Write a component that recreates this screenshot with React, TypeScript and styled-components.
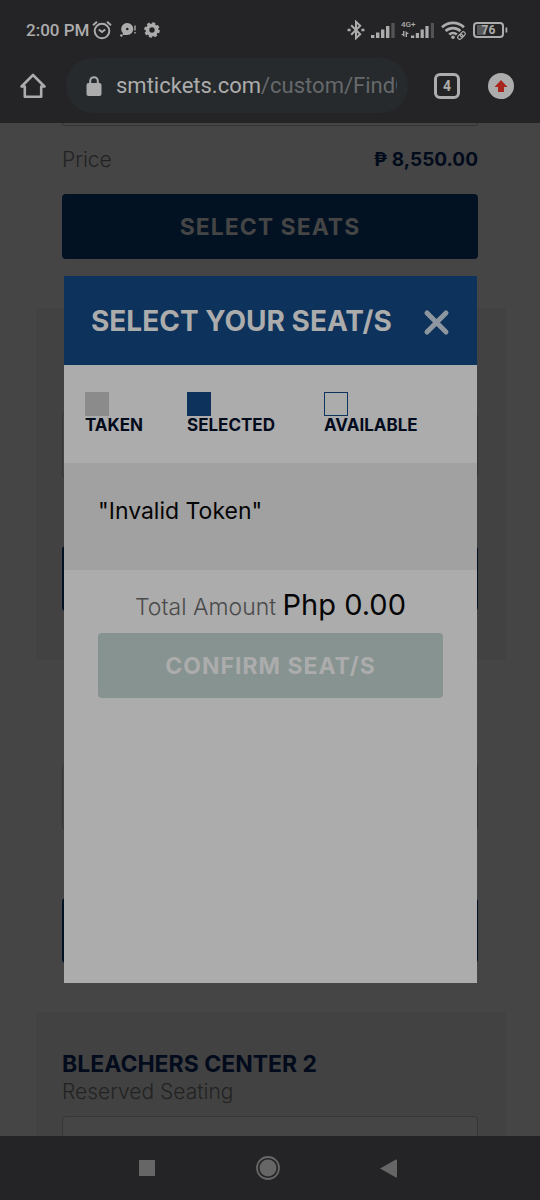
import React from "react";
import styled, { createGlobalStyle } from "styled-components";

const INK = "#020b1c";
const ICON = "#acacac";

const GlobalStyle = createGlobalStyle`
  *, *::before, *::after { box-sizing: border-box; }
  body { margin: 0; background: #454545; }
  button { font: inherit; color: inherit; border: 0; padding: 0; background: none; cursor: pointer; }
  svg { display: block; flex: none; }
`;

const Screen = styled.div`
  display: flex;
  flex-direction: column;
  height: 100vh;
  overflow: hidden;
  font-family: Inter, "Liberation Sans", sans-serif;
`;

const StatusBar = styled.header`
  display: flex;
  align-items: center;
  justify-content: space-between;
  height: 60px;
  padding: 0 32px 0 26px;
  flex: none;
  background: #242426;
  color: ${ICON};
  font: 500 17px/24px Roboto, sans-serif;
`;

const StatusGroup = styled.div<{ $gap: number }>`
  display: flex;
  align-items: center;
  gap: ${(p) => p.$gap}px;
`;

const BrowserBar = styled.nav`
  display: flex;
  align-items: center;
  height: 63px;
  padding: 0 26px 12px 19px;
  flex: none;
  background: #242426;
  color: ${ICON};
`;

const AddressPill = styled.button`
  display: flex;
  align-items: center;
  gap: 14px;
  flex: 1;
  min-width: 0;
  height: 55px;
  margin: 0 26px 0 19px;
  padding: 0 11px 0 20px;
  border-radius: 28px;
  background: #262a2d;
  text-align: left;
`;

const Url = styled.span`
  flex: 1;
  min-width: 0;
  overflow: hidden;
  white-space: nowrap;
  font: 400 22px/32px Roboto, sans-serif;
`;

const UrlPath = styled.span`
  color: #66696b;
`;

const BarButton = styled.button`
  display: flex;
  align-items: center;
  justify-content: center;
  width: 28px;
  height: 28px;
  flex: none;
`;

const TabCount = styled(BarButton)`
  width: 26px;
  height: 26px;
  margin-right: 28px;
  border: 3px solid ${ICON};
  border-radius: 6px;
  font: 700 14px/18px Roboto, sans-serif;
`;

const UpdateButton = styled(BarButton)`
  width: 26px;
  height: 26px;
  border-radius: 50%;
  background: ${ICON};
`;

const Page = styled.main`
  position: relative;
  flex: 1;
  min-height: 0;
  overflow: hidden;
  background: #454545;
`;

const TicketCard = styled.section<{ $tinted?: boolean }>`
  margin: 0 34px 0 36px;
  padding: 0 28px 49px 26px;
  background: ${(p) => (p.$tinted ? "#424242" : "transparent")};
`;

const CardHeading = styled.div`
  height: 104px;
  padding-top: 38px;
`;

const CardTitle = styled.h2`
  margin: 0;
  font-size: 23px;
  line-height: 28px;
  font-weight: 700;
  color: ${INK};
`;

const CardNote = styled.p`
  margin: 0;
  font-size: 21px;
  line-height: 28px;
  font-weight: 300;
  color: #222222;
`;

const TicketField = styled.div<{ $tail?: boolean }>`
  height: ${(p) => (p.$tail ? 3 : 66)}px;
  border: 1px solid #363636;
  border-top-width: ${(p) => (p.$tail ? 0 : 1)}px;
  border-radius: ${(p) => (p.$tail ? "0 0 4px 4px" : "4px")};
  background: #454545;
`;

const PriceRow = styled.div`
  display: flex;
  align-items: center;
  justify-content: space-between;
  height: 68px;
  font-size: 21px;
  line-height: 28px;
  color: #222222;
  font-weight: 300;
`;

const PriceValue = styled.strong`
  font-size: 19px;
  font-weight: 700;
  color: ${INK};
`;

const WideButton = styled.button<{ $pale?: boolean }>`
  display: block;
  width: 100%;
  height: 65px;
  border-radius: 4px;
  font-size: 23px;
  line-height: 28px;
  font-weight: 700;
  letter-spacing: 1px;
  background: ${(p) => (p.$pale ? "#869390" : "#021222")};
  color: ${(p) => (p.$pale ? "#acacac" : "#454545")};
`;

const Overlay = styled.div`
  position: absolute;
  inset: 0;
  display: flex;
  padding: 153px 63px 153px 64px;
`;

const Dialog = styled.section`
  flex: 1;
  min-width: 0;
  background: #acacac;
`;

const DialogHeader = styled.header`
  display: flex;
  align-items: center;
  justify-content: space-between;
  height: 89px;
  padding: 0 27px;
  background: #0d325b;
  color: #acacac;
`;

const DialogTitle = styled.h1`
  margin: 0;
  font-size: 28px;
  line-height: 36px;
  font-weight: 700;
  white-space: nowrap;
`;

const CloseButton = styled.button`
  padding-top: 4px;
`;

const Legend = styled.ul`
  display: flex;
  margin: 0;
  height: 98px;
  padding: 27px 21px 0;
  list-style: none;
`;

const LegendItem = styled.li<{ $width: number }>`
  width: ${(p) => p.$width}px;
  font-size: 17px;
  line-height: 18px;
  font-weight: 700;
  color: ${INK};
`;

const Swatch = styled.span<{ $fill: string; $line: string }>`
  display: block;
  width: 24px;
  height: 24px;
  border: 1px solid ${(p) => p.$line};
  background: ${(p) => p.$fill};
`;

const Message = styled.p`
  margin: 0;
  height: 107px;
  padding: 34px;
  background: #a1a1a1;
  color: #050505;
  font-size: 23px;
  line-height: 28px;
`;

const Summary = styled.div`
  padding: 17px 34px;
`;

const Total = styled.p`
  margin: 0 0 8px;
  text-align: center;
  font-size: 23px;
  line-height: 36px;
  font-weight: 300;
  color: #4a4a4a;
  white-space: nowrap;
`;

const Amount = styled.span`
  font-size: 29px;
  font-weight: 400;
  color: #050505;
`;

const SystemNav = styled.nav`
  display: flex;
  justify-content: space-between;
  align-items: center;
  height: 64px;
  padding: 0 138px 0 133px;
  flex: none;
  background: #242426;
  color: #666667;
`;

const AlarmIcon = () => (
  <svg width="20" height="20" viewBox="0 0 20 20" fill="none" stroke="currentColor" strokeWidth="2" aria-hidden="true">
    <circle cx="10" cy="11" r="7.3" />
    <path d="M6.8 9.5 10 12l3.2-2.5M1 5.2 5 1.8M19 5.2l-4-3.4" />
  </svg>
);

const ChatIcon = () => (
  <svg width="16" height="16" viewBox="0 0 16 16" fill="currentColor" aria-hidden="true">
    <path fillRule="evenodd" d="M7.3 1a6 6 0 1 1 0 12H2.8v-2A6 6 0 0 1 7.3 1Zm0 4.7a1.3 1.3 0 1 0 0 2.6 1.3 1.3 0 0 0 0-2.6Z" />
    <circle cx="1.4" cy="13.5" r="1.3" />
    <path d="M14.3 3.5h1.4v5h-1.4zM14.3 10h1.4v1.4h-1.4z" />
  </svg>
);

const GearIcon = () => (
  <svg width="16" height="16" viewBox="0 0 16 16" aria-hidden="true">
    <circle cx="8" cy="8" r="4.6" fill="none" stroke="currentColor" strokeWidth="3.8" />
    <circle cx="8" cy="8" r="6.8" fill="none" stroke="currentColor" strokeWidth="2" strokeDasharray="3 2.34" />
  </svg>
);

const BluetoothIcon = () => (
  <svg width="18" height="20" viewBox="0 0 18 20" fill="none" stroke="currentColor" strokeWidth="2" aria-hidden="true">
    <path d="m4.2 5.2 9 9L9 18.2V1.8l4.2 4-9 9" />
    <path d="M.6 10h3M14.4 10h3" strokeWidth="2.6" />
  </svg>
);

const SignalBars = () => (
  <svg width="24" height="18" viewBox="0 0 24 18" fill="currentColor" aria-hidden="true">
    <path d="M0 14h3.4v3H0zM5 11.5h3.4V17H5zM10 8.5h3.4V17H10zM15 5h3.4v12H15z" />
    <path d="M20.3 2h3.4v15h-3.4z" opacity=".35" />
  </svg>
);

const DataSignal = () => (
  <svg width="34" height="20" viewBox="0 0 34 20" fill="currentColor" aria-hidden="true">
    <text x="0" y="7" fontSize="8" fontFamily="Roboto, sans-serif">4G+</text>
    <path d="M2 11h1.4v5H2zM0 14h3.4v3zM4.6 12h1.4v5H4.6zM4.6 11 8 14H4.6z" />
    <path d="M10 15.5h3.2V18H10zM14.8 13H18v5h-3.2zM19.6 9.5h3.2V18h-3.2zM24.4 6h3.2v12h-3.2z" />
    <path d="M29.8 3H33v15h-3.2z" opacity=".35" />
  </svg>
);

const WifiIcon = () => (
  <svg width="26" height="20" viewBox="0 0 26 20" fill="none" stroke="currentColor" strokeWidth="2.7" aria-hidden="true">
    <path d="M1 7.2a16 16 0 0 1 22 0M4.6 11a11 11 0 0 1 14.8 0M8.2 14.5a5.6 5.6 0 0 1 7.6 0" />
    <circle cx="12" cy="17.2" r="1.8" fill="currentColor" stroke="none" />
    <g strokeWidth="1.2" transform="rotate(-45 20.5 15.5)">
      <rect x="16" y="13.5" width="5.5" height="4" rx="2" />
      <rect x="19.5" y="13.5" width="5.5" height="4" rx="2" />
    </g>
  </svg>
);

const BatteryIcon = () => (
  <svg width="35" height="16" viewBox="0 0 35 16" aria-hidden="true">
    <rect x="4" y="3" width="9" height="10" fill="#58585a" />
    <rect x="1" y="1" width="29" height="14" rx="3" fill="none" stroke="currentColor" strokeWidth="2" />
    <path d="M32.5 5.5h1.8v5h-1.8z" fill="currentColor" />
    <text x="15.5" y="12.2" textAnchor="middle" fontSize="12" fontWeight="700" fontFamily="Roboto, sans-serif" fill="currentColor">76</text>
  </svg>
);

const HomeIcon = () => (
  <svg width="28" height="28" viewBox="0 0 28 28" fill="none" stroke="currentColor" strokeWidth="2.6" strokeLinejoin="round" aria-hidden="true">
    <path d="M2.5 14.5 14 3l11.5 11.5h-3.3v10.2H5.8V14.5Z" />
  </svg>
);

const LockIcon = () => (
  <svg width="16" height="20" viewBox="0 0 16 20" aria-hidden="true">
    <rect x="0.5" y="7" width="15" height="13" rx="2" fill="currentColor" />
    <path d="M4.2 8V5a3.8 3.8 0 0 1 7.6 0v3" fill="none" stroke="currentColor" strokeWidth="2" />
  </svg>
);

const ArrowUpIcon = () => (
  <svg width="14" height="14" viewBox="0 0 14 14" fill="#a8261d" aria-hidden="true">
    <path d="m7 1 6.5 7H10v5H4V8H.5Z" />
  </svg>
);

const CloseIcon = () => (
  <svg width="27" height="27" viewBox="0 0 27 27" fill="none" stroke="#8e979f" strokeWidth="5" strokeLinecap="round" aria-hidden="true">
    <path d="m4 4 19 19M23 4 4 23" />
  </svg>
);

type TicketProps = {
  title?: string;
  note?: string;
  price?: string;
  action?: string;
  tinted?: boolean;
  tail?: boolean;
};

const Ticket = ({ title, note, price, action, tinted, tail }: TicketProps) => (
  <TicketCard $tinted={tinted}>
    {!tail && (
      <CardHeading>
        {title && <CardTitle>{title}</CardTitle>}
        {note && <CardNote>{note}</CardNote>}
      </CardHeading>
    )}
    <TicketField $tail={tail} />
    <PriceRow>
      {price && (
        <>
          <span>Price</span>
          <PriceValue>{price}</PriceValue>
        </>
      )}
    </PriceRow>
    <WideButton type="button" aria-label="Select seats">{action}</WideButton>
  </TicketCard>
);

const legend = [
  { label: "TAKEN", fill: "#8b8b8b", line: "#8b8b8b", width: 102 },
  { label: "SELECTED", fill: "#0d325b", line: "#0d325b", width: 137 },
  { label: "AVAILABLE", fill: "transparent", line: "#0d325b", width: 110 },
];

export default function App() {
  return (
    <Screen>
      <GlobalStyle />
      <StatusBar>
        <StatusGroup $gap={3}>
          <span>2:00 PM</span>
          <StatusGroup $gap={8}>
            <AlarmIcon />
            <ChatIcon />
            <GearIcon />
          </StatusGroup>
        </StatusGroup>
        <StatusGroup $gap={6}>
          <BluetoothIcon />
          <SignalBars />
          <DataSignal />
          <WifiIcon />
          <BatteryIcon />
        </StatusGroup>
      </StatusBar>
      <BrowserBar>
        <BarButton type="button" aria-label="Home"><HomeIcon /></BarButton>
        <AddressPill type="button">
          <LockIcon />
          <Url>smtickets.com<UrlPath>/custom/FindC</UrlPath></Url>
        </AddressPill>
        <TabCount type="button">4</TabCount>
        <UpdateButton type="button" aria-label="Update"><ArrowUpIcon /></UpdateButton>
      </BrowserBar>
      <Page>
        <Ticket tail price="₱ 8,550.00" action="SELECT SEATS" />
        <Ticket tinted />
        <Ticket />
        <Ticket tinted title="BLEACHERS CENTER 2" note="Reserved Seating" />
        <Overlay>
          <Dialog role="dialog" aria-labelledby="seat-title">
            <DialogHeader>
              <DialogTitle id="seat-title">SELECT YOUR SEAT/S</DialogTitle>
              <CloseButton type="button" aria-label="Close"><CloseIcon /></CloseButton>
            </DialogHeader>
            <Legend>
              {legend.map((item) => (
                <LegendItem key={item.label} $width={item.width}>
                  <Swatch $fill={item.fill} $line={item.line} />
                  {item.label}
                </LegendItem>
              ))}
            </Legend>
            <Message>"Invalid Token"</Message>
            <Summary>
              <Total>Total Amount <Amount>Php 0.00</Amount></Total>
              <WideButton type="button" $pale>CONFIRM SEAT/S</WideButton>
            </Summary>
          </Dialog>
        </Overlay>
      </Page>
      <SystemNav>
        <BarButton type="button" aria-label="Recent apps">
          <svg width="16" height="16" viewBox="0 0 16 16" fill="currentColor"><rect width="16" height="16" rx="0.5" /></svg>
        </BarButton>
        <BarButton type="button" aria-label="Home screen">
          <svg width="24" height="24" viewBox="0 0 24 24" fill="currentColor">
            <circle cx="12" cy="12" r="11" fill="none" stroke="currentColor" strokeWidth="1.8" />
            <circle cx="12" cy="12" r="8.5" />
          </svg>
        </BarButton>
        <BarButton type="button" aria-label="Back">
          <svg width="17" height="19" viewBox="0 0 17 19" fill="currentColor"><path d="M0 9.5 16 .5q1-.4 1 .8v16.4q0 1.2-1 .8Z" /></svg>
        </BarButton>
      </SystemNav>
    </Screen>
  );
}
